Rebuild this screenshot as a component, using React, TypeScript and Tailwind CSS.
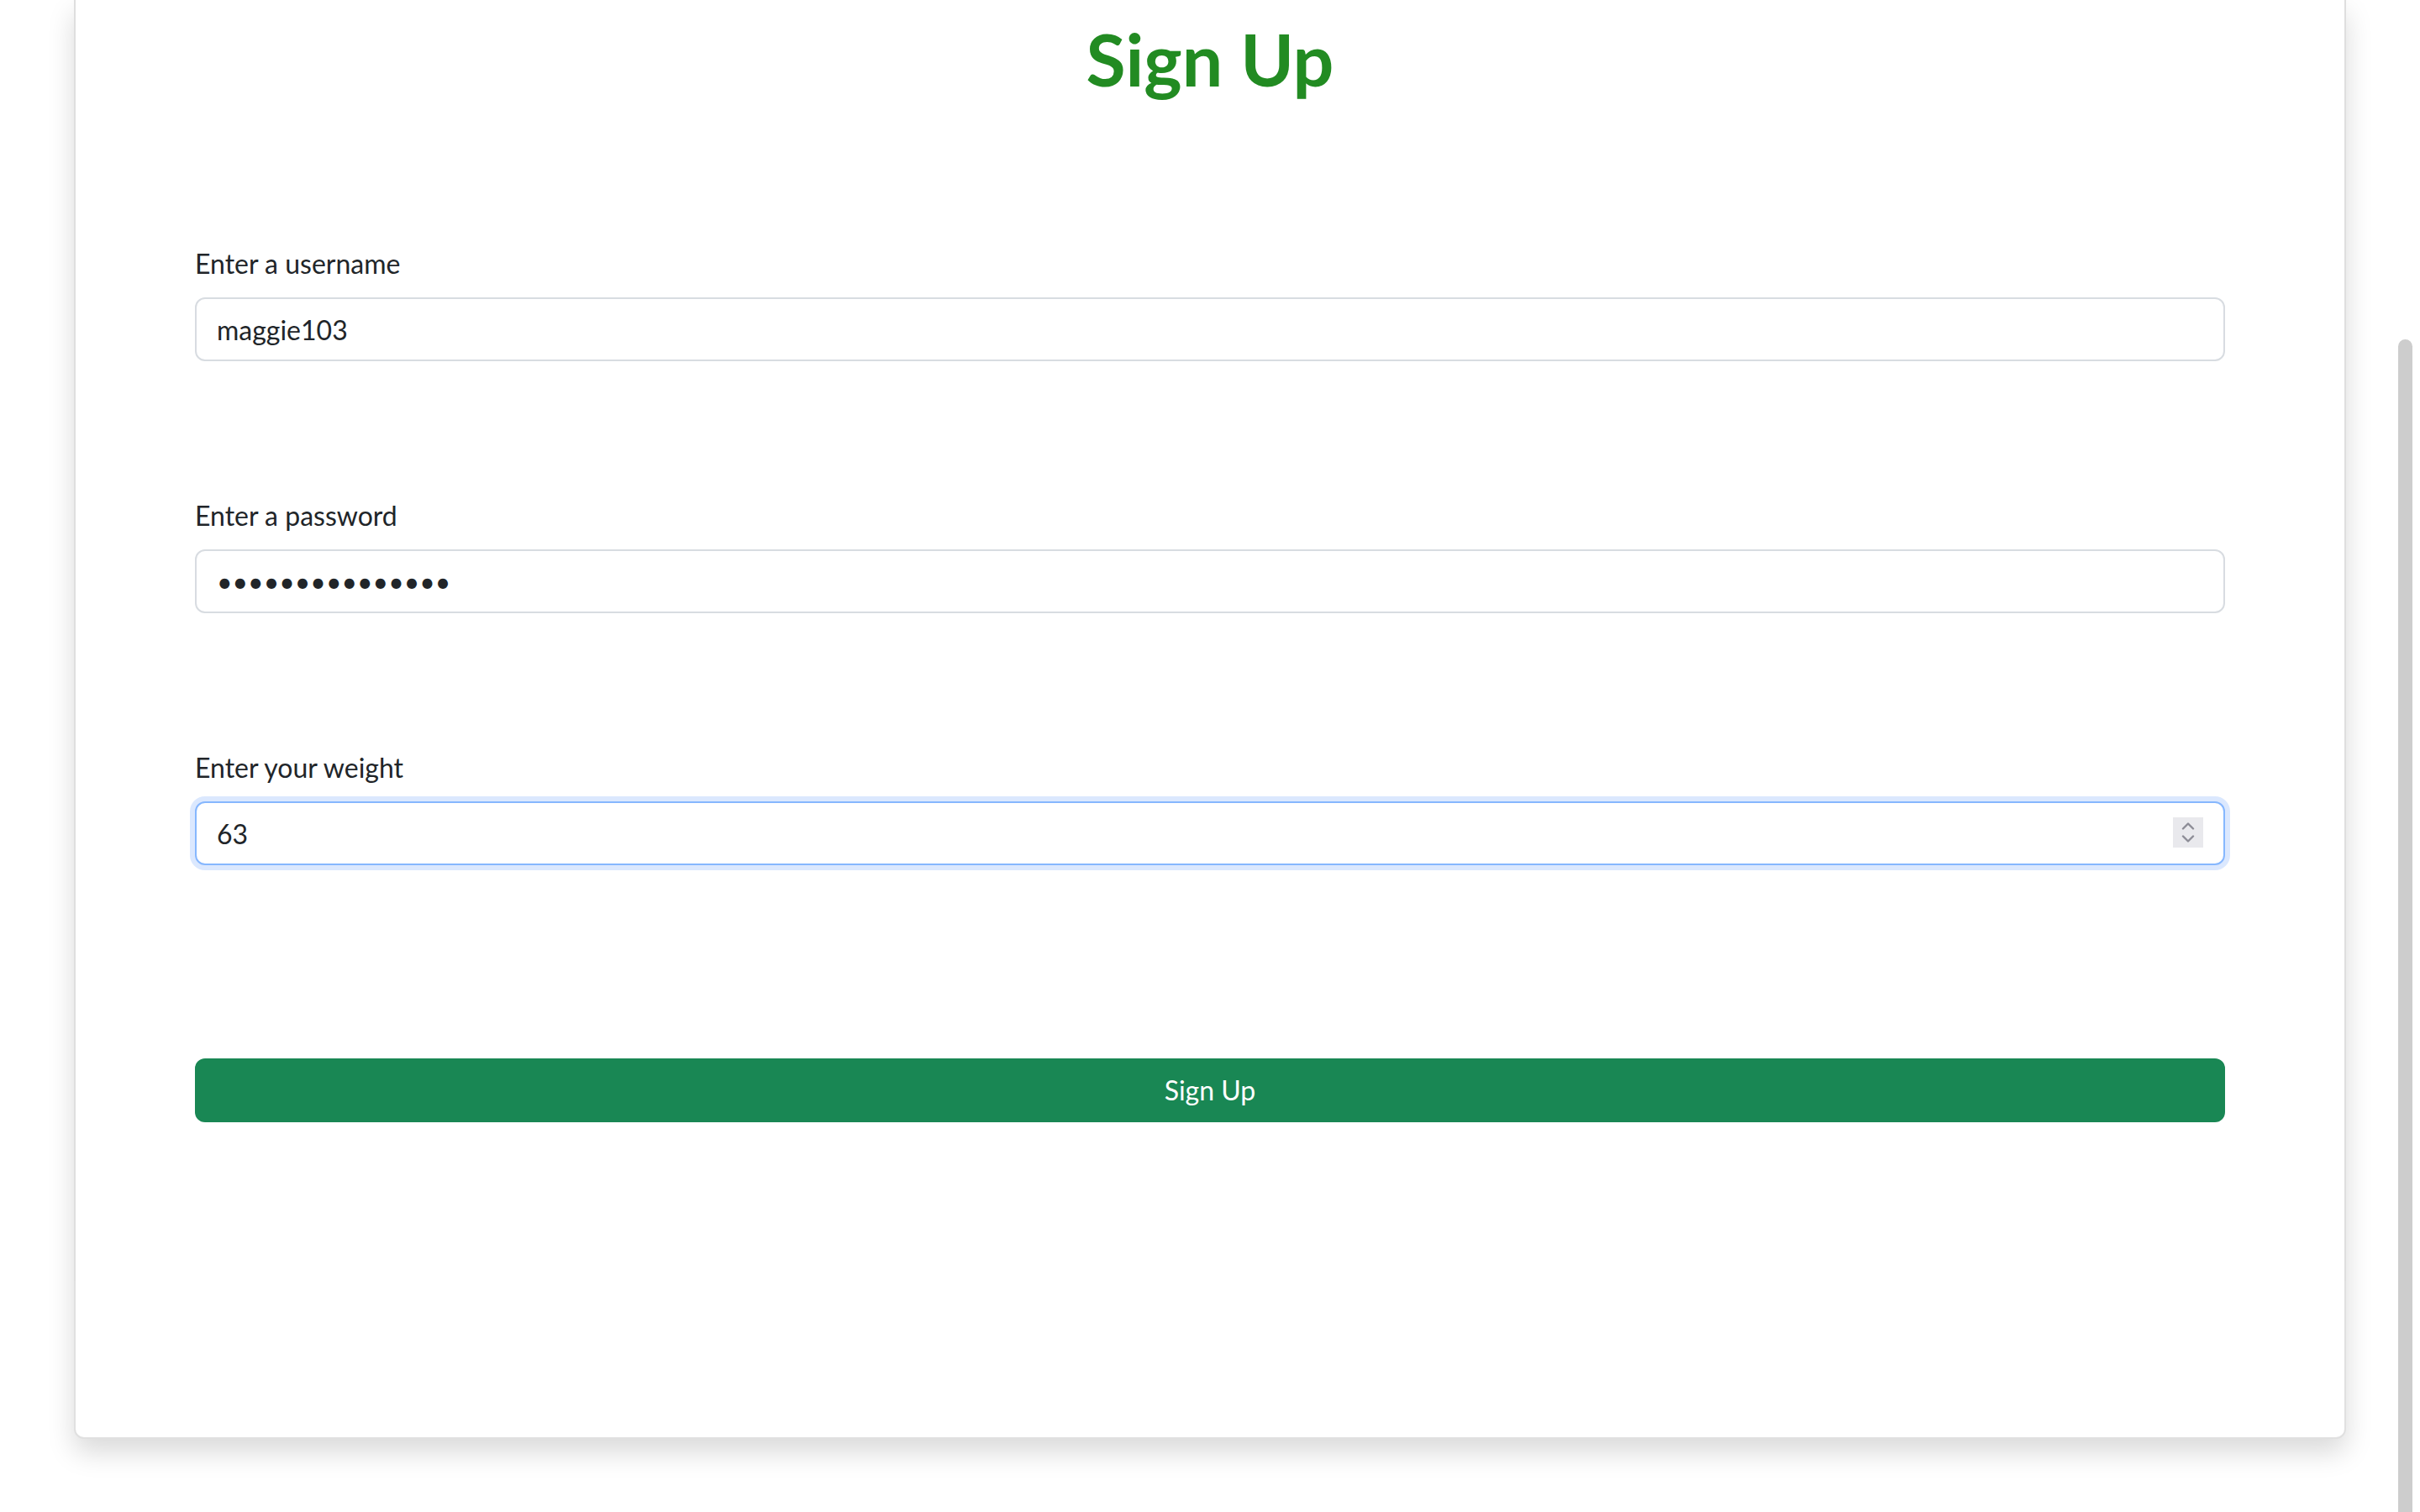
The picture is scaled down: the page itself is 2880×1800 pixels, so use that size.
import { useState } from "react";

const inputBase =
  "block w-full h-[76px] rounded-[12px] border-2 bg-white pl-[24px] pr-[22px] text-[32px] text-[#212529] outline-none";

const Field = ({
  label,
  children,
}: {
  label: string;
  children: React.ReactNode;
}) => (
  <div className="flex flex-col">
    <label className="mb-[16px] block text-[32px] leading-[48px] text-[#212529]">{label}</label>
    {children}
  </div>
);

const Spinner = () => (
  <div className="absolute right-[26px] top-[19px] flex h-[36px] w-[36px] flex-col items-center justify-center gap-[6px] bg-[#e9e9ed]">
    <svg width="16" height="10" viewBox="0 0 16 10" fill="none">
      <path d="M2 8.5 8 2.5l6 6" stroke="#8c8c96" strokeWidth="2.4" strokeLinecap="round" strokeLinejoin="round" />
    </svg>
    <svg width="16" height="10" viewBox="0 0 16 10" fill="none">
      <path d="M2 1.5l6 6 6-6" stroke="#8c8c96" strokeWidth="2.4" strokeLinecap="round" strokeLinejoin="round" />
    </svg>
  </div>
);

export default function App() {
  const [username, setUsername] = useState("maggie103");
  const [password, setPassword] = useState("maggiepassword1");
  const [weight, setWeight] = useState("63");

  return (
    <div className="relative h-[1800px] w-full overflow-hidden bg-white font-['Lato',sans-serif]">
      <div className="mx-[88px] rounded-b-[12px] border-2 border-t-0 border-[rgba(0,0,0,0.12)] bg-white pb-[375px] pl-[142px] pr-[142px] pt-[27px] shadow-[0_16px_32px_rgba(0,0,0,0.15)]">
        <h1 className="mb-[177px] text-center text-[86px] font-bold leading-[86px] text-[#228b22]">Sign Up</h1>

        <div className="flex flex-col gap-[160px]">
          <Field label="Enter a username">
            <input
              className={`${inputBase} border-[#d8dce1]`}
              value={username}
              onChange={(e) => setUsername(e.target.value)}
            />
          </Field>

          <Field label="Enter a password">
            <input
              type="password"
              className={`${inputBase} border-[#d8dce1]`}
              value={password}
              onChange={(e) => setPassword(e.target.value)}
            />
          </Field>

          <Field label="Enter your weight">
            <div className="relative">
              <input
                inputMode="numeric"
                className={`${inputBase} border-[#86b7fe] shadow-[0_0_0_6px_#dbe8fe]`}
                value={weight}
                onChange={(e) => setWeight(e.target.value)}
              />
              <Spinner />
            </div>
          </Field>
        </div>

        <button className="mt-[230px] block h-[76px] w-full rounded-[12px] bg-[#198754] text-[32px] text-white">
          Sign Up
        </button>
      </div>

      {/* scrollbar thumb */}
      <div className="absolute left-[2854px] top-[404px] h-[1410px] w-[17px] rounded-full bg-[#cdcdcd]" />
    </div>
  );
}
